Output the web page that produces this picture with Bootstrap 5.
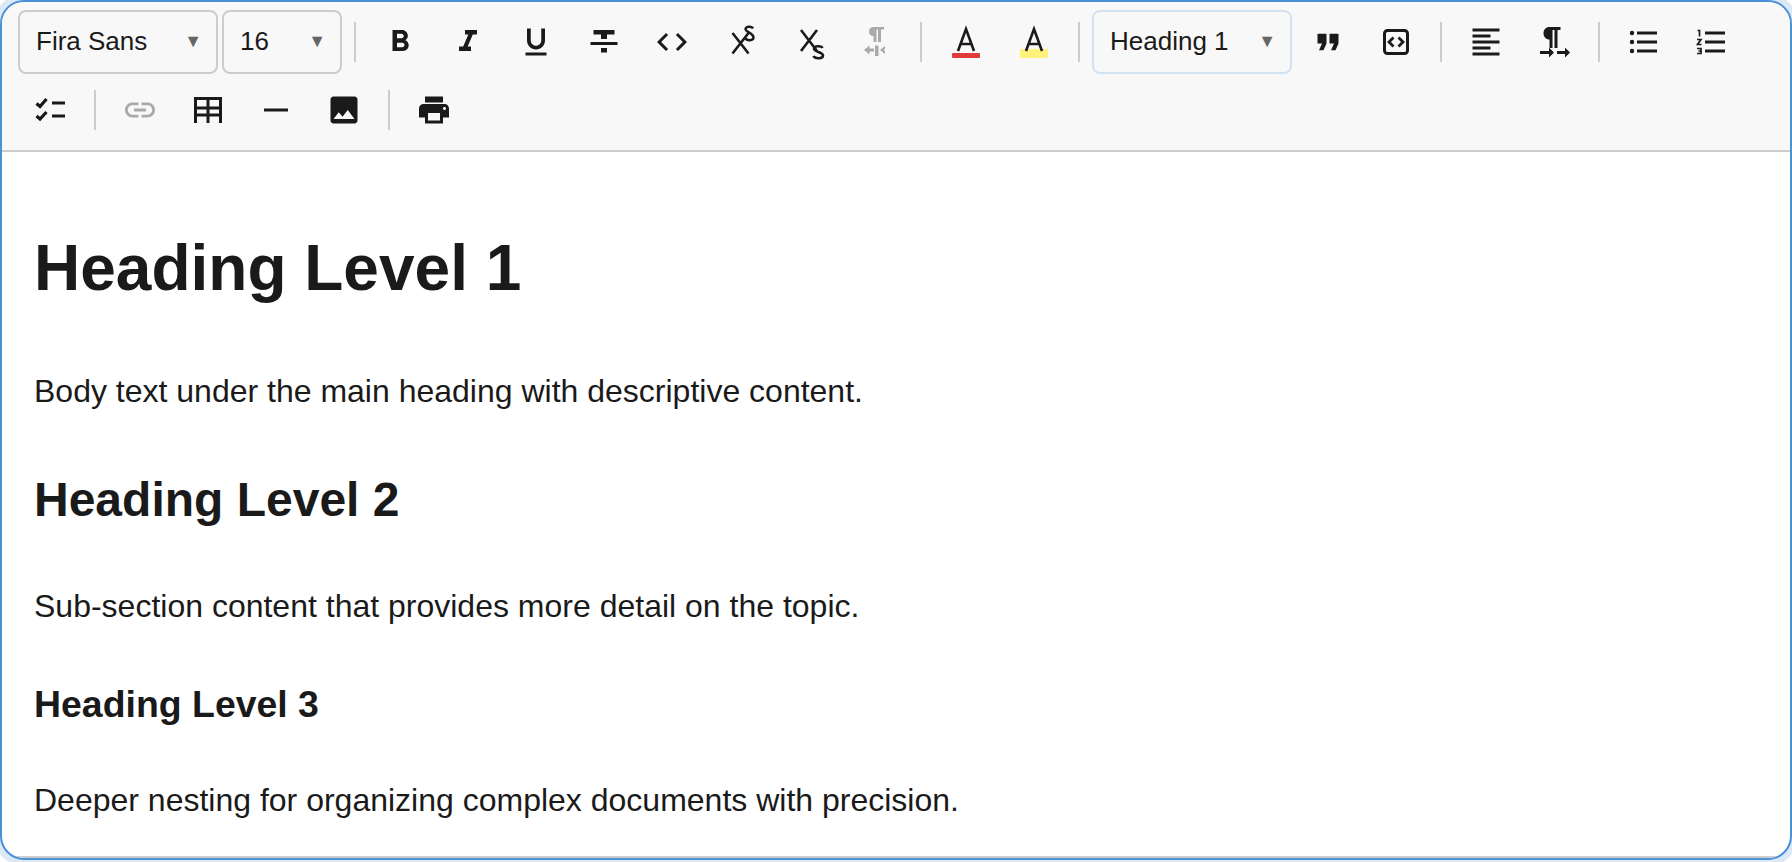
<!DOCTYPE html>
<html lang="en">
<head>
  <meta charset="UTF-8">
  <title>Rich Text Editor</title>
  <meta name="viewport" content="width=device-width, initial-scale=1">
  <link href="https://cdn.jsdelivr.net/npm/bootstrap@5.3.3/dist/css/bootstrap.min.css" rel="stylesheet">
  <style>
    html, body { height: 100%; margin: 0; background: #fff; overflow: hidden; }
    body { font-family: "Liberation Sans", Arial, sans-serif; color: #1a1a1a; }
    .editor-box {
      height: calc(100vh - 2px);
      border: 2px solid #4a90d9;
      border-radius: 24px;
      box-shadow: 0 0 0 6px rgba(74, 144, 217, .2);
      overflow: hidden;
      background: #fff;
    }
    .tb-wrap {
      gap: 4px;
      padding: 8px 16px;
      background: #f8f8f8;
      border-bottom: 2px solid #ccc;
    }
    .tb-btn {
      width: 64px;
      height: 64px;
      padding: 0;
      border: 0;
      color: #1a1a1a;
    }
    .tb-btn.is-off { color: #aaa; }
    .tb-btn svg { display: block; width: 36px; height: 36px; }
    .fill-ic { fill: currentColor; }
    .line-ic { fill: none; stroke: currentColor; stroke-width: 2.6; }
    .tb-sep {
      width: 2px;
      height: 40px;
      margin: 12px 8px;
      background: #ccc;
    }
    .tb-select {
      height: 64px;
      padding: 0 14px 2px 16px;
      font-size: 26px;
      line-height: 1;
      color: #1a1a1a;
      background: #f8f8f8;
      border: 2px solid #ccc;
      border-radius: 8px;
    }
    .sel-font { width: 200px; }
    .sel-size { width: 120px; }
    .sel-block { width: 200px; border-color: #d3e2f1; }
    .sel-arrow { font-size: 18px; color: #666; }
    .doc-area {
      padding: 19px 32px 0;
      font-size: 32px;
      line-height: 1.7;
      min-height: 0;
      overflow: hidden;
    }
    .doc-area h1, .doc-area h2, .doc-area h3 {
      font-family: inherit;
      font-weight: 700;
      line-height: 1.7;
      color: #1a1a1a;
    }
    .doc-area h1 { font-size: 64px; margin: 43px 0 41px; }
    .doc-area h2 { font-size: 48px; margin: 41px 0 38px; }
    .doc-area h3 { font-size: 37.44px; margin: 40px 0 36px; }
    .doc-area p { margin: 0; }
    .doc-foot { height: 2px; background: #ccc; }
  </style>
</head>
<body>

<div class="editor-box d-flex flex-column">

  <!-- Toolbar -->
  <div class="tb-wrap d-flex flex-wrap">
    <button class="btn tb-select sel-font d-flex align-items-center justify-content-between"><span>Fira Sans</span><span class="sel-arrow">▼</span></button>
    <button class="btn tb-select sel-size d-flex align-items-center justify-content-between"><span>16</span><span class="sel-arrow">▼</span></button>
    <div class="tb-sep"></div>

    <button class="btn tb-btn d-flex align-items-center justify-content-center" title="Bold">
      <svg viewBox="0 0 24 24" class="fill-ic"><path d="M15.6 10.79c.97-.67 1.65-1.77 1.65-2.79 0-2.26-1.75-4-4-4H7v14h7.04c2.09 0 3.75-1.7 3.75-3.79 0-1.52-.86-2.82-2.19-3.42zM10 6.5h3c.83 0 1.5.67 1.5 1.5s-.67 1.5-1.5 1.5h-3v-3zm3.5 9H10v-3h3.5c.83 0 1.5.67 1.5 1.5s-.67 1.5-1.5 1.5z"/></svg>
    </button>
    <button class="btn tb-btn d-flex align-items-center justify-content-center" title="Italic">
      <svg viewBox="0 0 24 24" class="fill-ic"><path d="M10 4v3h2.21l-3.42 8H6v3h8v-3h-2.21l3.42-8H18V4z"/></svg>
    </button>
    <button class="btn tb-btn d-flex align-items-center justify-content-center" title="Underline">
      <svg viewBox="0 0 24 24" class="fill-ic"><path d="M12 17c3.31 0 6-2.69 6-6V3h-2.5v8c0 1.93-1.57 3.5-3.5 3.5S8.5 12.93 8.5 11V3H6v8c0 3.31 2.69 6 6 6zm-7 2v2h14v-2H5z"/></svg>
    </button>
    <button class="btn tb-btn d-flex align-items-center justify-content-center" title="Strikethrough">
      <svg viewBox="0 0 24 24" class="fill-ic"><path d="M10 19h4v-3h-4v3zM5 4v3h5v3h4V7h5V4H5zM3 14h18v-2H3v2z"/></svg>
    </button>
    <button class="btn tb-btn d-flex align-items-center justify-content-center" title="Code">
      <svg viewBox="0 0 24 24" class="fill-ic"><path d="M9.4 16.6L4.8 12l4.6-4.6L8 6l-6 6 6 6 1.4-1.4zm5.2 0l4.6-4.6-4.6-4.6L16 6l6 6-6 6-1.4-1.4z"/></svg>
    </button>
    <button class="btn tb-btn d-flex align-items-center justify-content-center" title="Superscript">
      <svg viewBox="0 0 36 36" class="line-ic"><path d="M10.500 9l16 20.500M26.500 9l-16 20.500"/><path stroke-width="2.400" d="M31 4.500c-1-2.500-7-2.500-7.500 .5-.5 3 8 4 8 8.500 0 3.500-7 3.500-8 .5"/></svg>
    </button>
    <button class="btn tb-btn d-flex align-items-center justify-content-center" title="Subscript">
      <svg viewBox="0 0 36 36" class="line-ic"><path d="M11 6l16 21M27 6L11 27"/><path d="M32.500 24c-1-2.500-8-2.500-8.500 .5-.5 3.500 9 3.500 9 7 0 3.500-8 3.500-9.500 .5"/></svg>
    </button>
    <button class="btn tb-btn is-off d-flex align-items-center justify-content-center" title="Right to left">
      <svg viewBox="0 0 36 36" class="fill-ic"><path d="M15.500 12v6h3V5.500h1.500V18h3V5.500h3V3H15.500c-3 0-4.500 2-4.500 4.500S12.500 12 15.500 12z"/><path d="M6 26l5.500-4.500v3H16v3H11.500v3zM17 21.500h3.500V32H17zM27 22v3l-1.500 1 1.500 1v3l-5-4z"/></svg>
    </button>
    <div class="tb-sep"></div>

    <button class="btn tb-btn d-flex align-items-center justify-content-center" title="Text color">
      <svg viewBox="0 0 36 36"><rect x="4" y="29" width="28" height="5" rx="1" fill="#e03a3a"/><path class="line-ic" d="M10 27L18 5l8 22M12.500 20h11"/></svg>
    </button>
    <button class="btn tb-btn d-flex align-items-center justify-content-center" title="Highlight">
      <svg viewBox="0 0 36 36"><rect x="4" y="25" width="28" height="9" rx="1" fill="#fff27a"/><path class="line-ic" d="M10 27L18 5l8 22M12.500 20h11"/></svg>
    </button>
    <div class="tb-sep"></div>

    <button class="btn tb-select sel-block d-flex align-items-center justify-content-between"><span>Heading 1</span><span class="sel-arrow">▼</span></button>

    <button class="btn tb-btn d-flex align-items-center justify-content-center" title="Blockquote">
      <svg viewBox="0 0 24 24" class="fill-ic"><path d="M6 17.500h3l2-4.500V6.500H5V13h3zm8 0h3l2-4.500V6.500h-6V13h3z"/></svg>
    </button>
    <button class="btn tb-btn d-flex align-items-center justify-content-center" title="Code block">
      <svg viewBox="0 0 36 36" class="line-ic"><rect x="6.500" y="6.500" width="23" height="23" rx="3" stroke-width="3"/><path stroke-width="2.800" d="M15.500 13.500L11 18l4.500 4.500M20.500 13.500L25 18l-4.500 4.500"/></svg>
    </button>
    <div class="tb-sep"></div>

    <button class="btn tb-btn d-flex align-items-center justify-content-center" title="Align">
      <svg viewBox="0 0 24 24" class="fill-ic"><path d="M15 15H3v2h12v-2zm0-8H3v2h12V7zM3 13h18v-2H3v2zm0 8h18v-2H3v2zM3 3v2h18V3H3z"/></svg>
    </button>
    <button class="btn tb-btn d-flex align-items-center justify-content-center" title="Left to right">
      <svg viewBox="0 0 36 36" class="fill-ic"><path d="M13.500 15.500V24H16.500V6h2v18h3V6h3V3H13.500C10 3 7.500 5.700 7.500 9.200s2.500 6.300 6 6.300z"/><path d="M4 27h9v-3.500l5 5-5 5V30H4zM21 27h8v-3.500l5 5-5 5V30h-8z"/></svg>
    </button>
    <div class="tb-sep"></div>

    <button class="btn tb-btn d-flex align-items-center justify-content-center" title="Bullet list">
      <svg viewBox="0 0 36 36" class="fill-ic"><circle cx="6" cy="9" r="2.200"/><circle cx="6" cy="18" r="2.200"/><circle cx="6" cy="27" r="2.200"/><path d="M11 7.500h20v3H11zM11 16.500h20v3H11zM11 25.500h20v3H11z"/></svg>
    </button>
    <button class="btn tb-btn d-flex align-items-center justify-content-center" title="Ordered list">
      <svg viewBox="0 0 36 36" class="fill-ic"><path d="M11 7.500h20v3H11zM11 16.500h20v3H11zM11 25.500h20v3H11z"/><path fill="none" stroke="currentColor" stroke-width="1.700" d="M3.500 6.500h2v6M3 15.500h4l-3.500 5H7.500M3 24.500h4v5H3M4.500 27h2.500"/></svg>
    </button>

    <button class="btn tb-btn d-flex align-items-center justify-content-center" title="Task list">
      <svg viewBox="0 0 36 36" class="fill-ic"><path fill="none" stroke="currentColor" stroke-width="3.200" d="M4.500 11.500l3.500 3L14.500 7M4.500 24l3.500 3 6.500-7"/><path d="M20 9.500h13v3H20zM20 22.500h13v3H20z"/></svg>
    </button>
    <div class="tb-sep"></div>

    <button class="btn tb-btn is-off d-flex align-items-center justify-content-center" title="Link">
      <svg viewBox="0 0 24 24" class="fill-ic"><path d="M3.900 12c0-1.710 1.390-3.100 3.100-3.100h4V7H7c-2.760 0-5 2.240-5 5s2.240 5 5 5h4v-1.900H7c-1.710 0-3.100-1.390-3.100-3.100zM8 13h8v-2H8v2zm9-6h-4v1.900h4c1.710 0 3.100 1.390 3.100 3.100s-1.390 3.100-3.100 3.100h-4V17h4c2.760 0 5-2.240 5-5s-2.240-5-5-5z"/></svg>
    </button>
    <button class="btn tb-btn d-flex align-items-center justify-content-center" title="Table">
      <svg viewBox="0 0 36 36" class="fill-ic"><path d="M4 5h28v26h-3v-6.500h-9.500V31h-3v-6.500H7V31H4zM7 8v6.500h9.500V8zm12.500 0v6.500H29V8zM7 17.500v4h9.500v-4zm12.500 0v4H29v-4z" fill-rule="evenodd"/></svg>
    </button>
    <button class="btn tb-btn d-flex align-items-center justify-content-center" title="Horizontal rule">
      <svg viewBox="0 0 36 36" class="fill-ic"><path d="M6 16.500h24v3H6z"/></svg>
    </button>
    <button class="btn tb-btn d-flex align-items-center justify-content-center" title="Image">
      <svg viewBox="0 0 24 24" class="fill-ic"><path d="M21 19V5c0-1.100-.9-2-2-2H5c-1.100 0-2 .9-2 2v14c0 1.100.9 2 2 2h14c1.100 0 2-.9 2-2zM8.500 13.500l2.500 3.010L14.500 12l4.500 6H5l3.500-4.500z"/></svg>
    </button>
    <div class="tb-sep"></div>

    <button class="btn tb-btn d-flex align-items-center justify-content-center" title="Print">
      <svg viewBox="0 0 24 24" class="fill-ic"><path d="M19 8H5c-1.660 0-3 1.340-3 3v6h4v4h12v-4h4v-6c0-1.660-1.340-3-3-3zm-3 11H8v-5h8v5zm3-7c-.55 0-1-.45-1-1s.45-1 1-1 1 .45 1 1-.45 1-1 1zm-1-9H6v4h12V3z"/></svg>
    </button>
  </div>

  <!-- Document -->
  <div class="doc-area flex-grow-1">
    <h1>Heading Level 1</h1>
    <p>Body text under the main heading with descriptive content.</p>
    <h2>Heading Level 2</h2>
    <p>Sub-section content that provides more detail on the topic.</p>
    <h3>Heading Level 3</h3>
    <p>Deeper nesting for organizing complex documents with precision.</p>
  </div>
  <div class="doc-foot flex-shrink-0"></div>
</div>

<script src="https://cdn.jsdelivr.net/npm/bootstrap@5.3.3/dist/js/bootstrap.bundle.min.js"></script>
</body>
</html>
